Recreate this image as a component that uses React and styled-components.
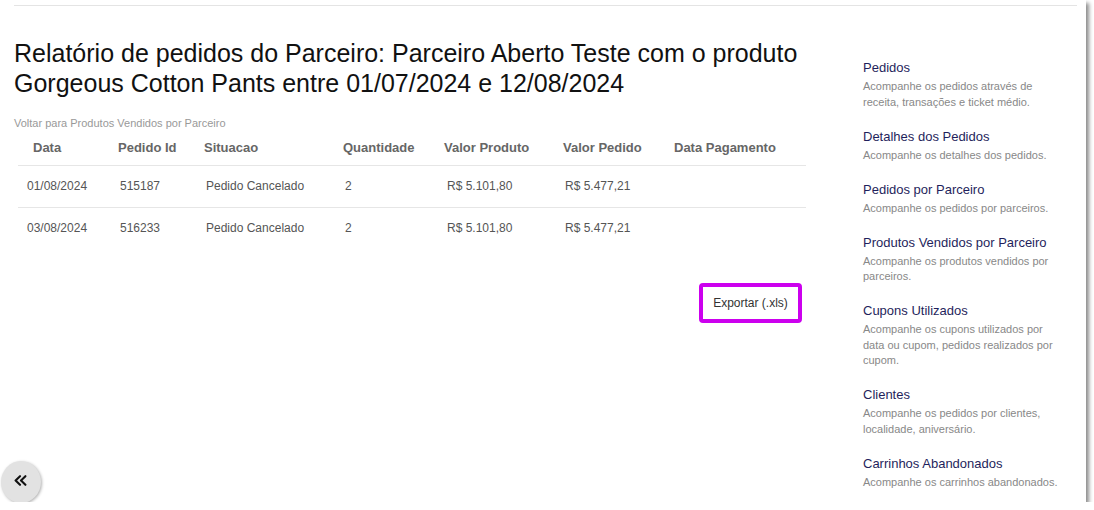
import React from "react";
import styled, { createGlobalStyle } from "styled-components";

const Global = createGlobalStyle`
  html, body { margin: 0; padding: 0; background: #ffffff; }
  body { font-family: "Liberation Sans", Arial, sans-serif; }
  * { box-sizing: border-box; }
`;

const Frame = styled.div`
  position: relative;
  width: 1086px;
  height: 502px;
  background: #fff;
  overflow: hidden;
  box-shadow: 3px 3px 4px rgba(0, 0, 0, 0.45);
`;

const TopRule = styled.div`
  margin: 5px 9px 0 14px;
  height: 1px;
  background: #e4e4e4;
`;

const Body = styled.div`
  display: flex;
  padding-left: 14px;
  gap: 57px;
`;

const Main = styled.main`
  width: 792px;
  display: flex;
  flex-direction: column;
`;

const Title = styled.h1`
  margin: 32px 0 0;
  font-size: 25px;
  line-height: 30px;
  font-weight: normal;
  color: #111;
`;

const BackLink = styled.a`
  margin-top: 18px;
  font-size: 11px;
  line-height: 14px;
  color: #999;
  text-decoration: none;
`;

const Table = styled.table`
  margin: 0 0 0 4px;
  width: 788px;
  border-collapse: collapse;
  table-layout: fixed;
`;

const Th = styled.th`
  height: 35px;
  padding: 0 0 0 ${(p) => p.$pad ?? 7}px;
  text-align: left;
  font-size: 13px;
  font-weight: bold;
  color: #666;
  vertical-align: middle;
`;

const Tr = styled.tr`
  border-top: 1px solid #e6e6e6;
`;

const Td = styled.td`
  height: 42px;
  padding: 0 0 0 ${(p) => p.$pad ?? 9}px;
  font-size: 12px;
  color: #555;
  vertical-align: middle;
`;

const Actions = styled.div`
  display: flex;
  justify-content: flex-end;
  margin-top: 34px;
  padding-right: 4px;
`;

const ExportButton = styled.button`
  width: 103px;
  height: 40px;
  border: 4px solid #cc00ee;
  border-radius: 4px;
  background: #fff;
  font-family: "Liberation Sans", Arial, sans-serif;
  font-size: 12px;
  color: #333;
  padding: 0;
  cursor: pointer;
`;

const Sidebar = styled.aside`
  width: 200px;
  padding-top: 54px;
  display: flex;
  flex-direction: column;
  gap: 18.5px;
`;

const NavItem = styled.div`
  display: flex;
  flex-direction: column;
`;

const NavTitle = styled.a`
  font-size: 13px;
  line-height: 16px;
  color: #1f1f5c;
  text-decoration: none;
  margin-bottom: 3px;
`;

const NavDesc = styled.p`
  margin: 0;
  font-size: 11px;
  line-height: 15.5px;
  color: #888;
`;

const CollapseButton = styled.button`
  position: absolute;
  left: 1px;
  top: 461px;
  width: 40px;
  height: 42px;
  border-radius: 50%;
  border: none;
  background: #e2e2e2;
  box-shadow: 1px 1px 3px rgba(0, 0, 0, 0.3);
  display: flex;
  align-items: center;
  justify-content: center;
  padding: 0 2px 4px 0;
  cursor: pointer;
`;

const columns = [
  { label: "Data", w: 94, th: 15, td: 9 },
  { label: "Pedido Id", w: 86, th: 6, td: 8 },
  { label: "Situacao", w: 139, th: 6, td: 8 },
  { label: "Quantidade", w: 102, th: 6, td: 8 },
  { label: "Valor Produto", w: 118, th: 5, td: 8 },
  { label: "Valor Pedido", w: 110, th: 6, td: 8 },
  { label: "Data Pagamento", w: 139, th: 7, td: 8 },
];

const rows = [
  ["01/08/2024", "515187", "Pedido Cancelado", "2", "R$ 5.101,80", "R$ 5.477,21", ""],
  ["03/08/2024", "516233", "Pedido Cancelado", "2", "R$ 5.101,80", "R$ 5.477,21", ""],
];

const nav = [
  ["Pedidos", "Acompanhe os pedidos através de receita, transações e ticket médio."],
  ["Detalhes dos Pedidos", "Acompanhe os detalhes dos pedidos."],
  ["Pedidos por Parceiro", "Acompanhe os pedidos por parceiros."],
  ["Produtos Vendidos por Parceiro", "Acompanhe os produtos vendidos por parceiros."],
  ["Cupons Utilizados", "Acompanhe os cupons utilizados por data ou cupom, pedidos realizados por cupom."],
  ["Clientes", "Acompanhe os pedidos por clientes, localidade, aniversário."],
  ["Carrinhos Abandonados", "Acompanhe os carrinhos abandonados."],
];

export default function App() {
  return (
    <>
      <Global />
      <Frame>
        <TopRule />
        <Body>
          <Main>
            <Title>
              Relatório de pedidos do Parceiro: Parceiro Aberto Teste com o produto Gorgeous Cotton Pants entre 01/07/2024 e 12/08/2024
            </Title>
            <BackLink href="#">Voltar para Produtos Vendidos por Parceiro</BackLink>
            <Table>
              <colgroup>
                {columns.map((c) => (
                  <col key={c.label} style={{ width: c.w }} />
                ))}
              </colgroup>
              <thead>
                <tr>
                  {columns.map((c) => (
                    <Th key={c.label} $pad={c.th}>{c.label}</Th>
                  ))}
                </tr>
              </thead>
              <tbody>
                {rows.map((r, i) => (
                  <Tr key={i}>
                    {r.map((v, j) => (
                      <Td key={j} $pad={columns[j].td}>{v}</Td>
                    ))}
                  </Tr>
                ))}
              </tbody>
            </Table>
            <Actions>
              <ExportButton>Exportar (.xls)</ExportButton>
            </Actions>
          </Main>
          <Sidebar>
            {nav.map(([t, d]) => (
              <NavItem key={t}>
                <NavTitle href="#">{t}</NavTitle>
                <NavDesc>{d}</NavDesc>
              </NavItem>
            ))}
          </Sidebar>
        </Body>
        <CollapseButton aria-label="Recolher">
          <svg width="13" height="11" viewBox="0 0 13 11" fill="none" stroke="#111" strokeWidth="2.1" strokeLinecap="round" strokeLinejoin="round">
            <path d="M6 1.2 L1.6 5.5 L6 9.8" />
            <path d="M11.4 1.2 L7 5.5 L11.4 9.8" />
          </svg>
        </CollapseButton>
      </Frame>
    </>
  );
}
